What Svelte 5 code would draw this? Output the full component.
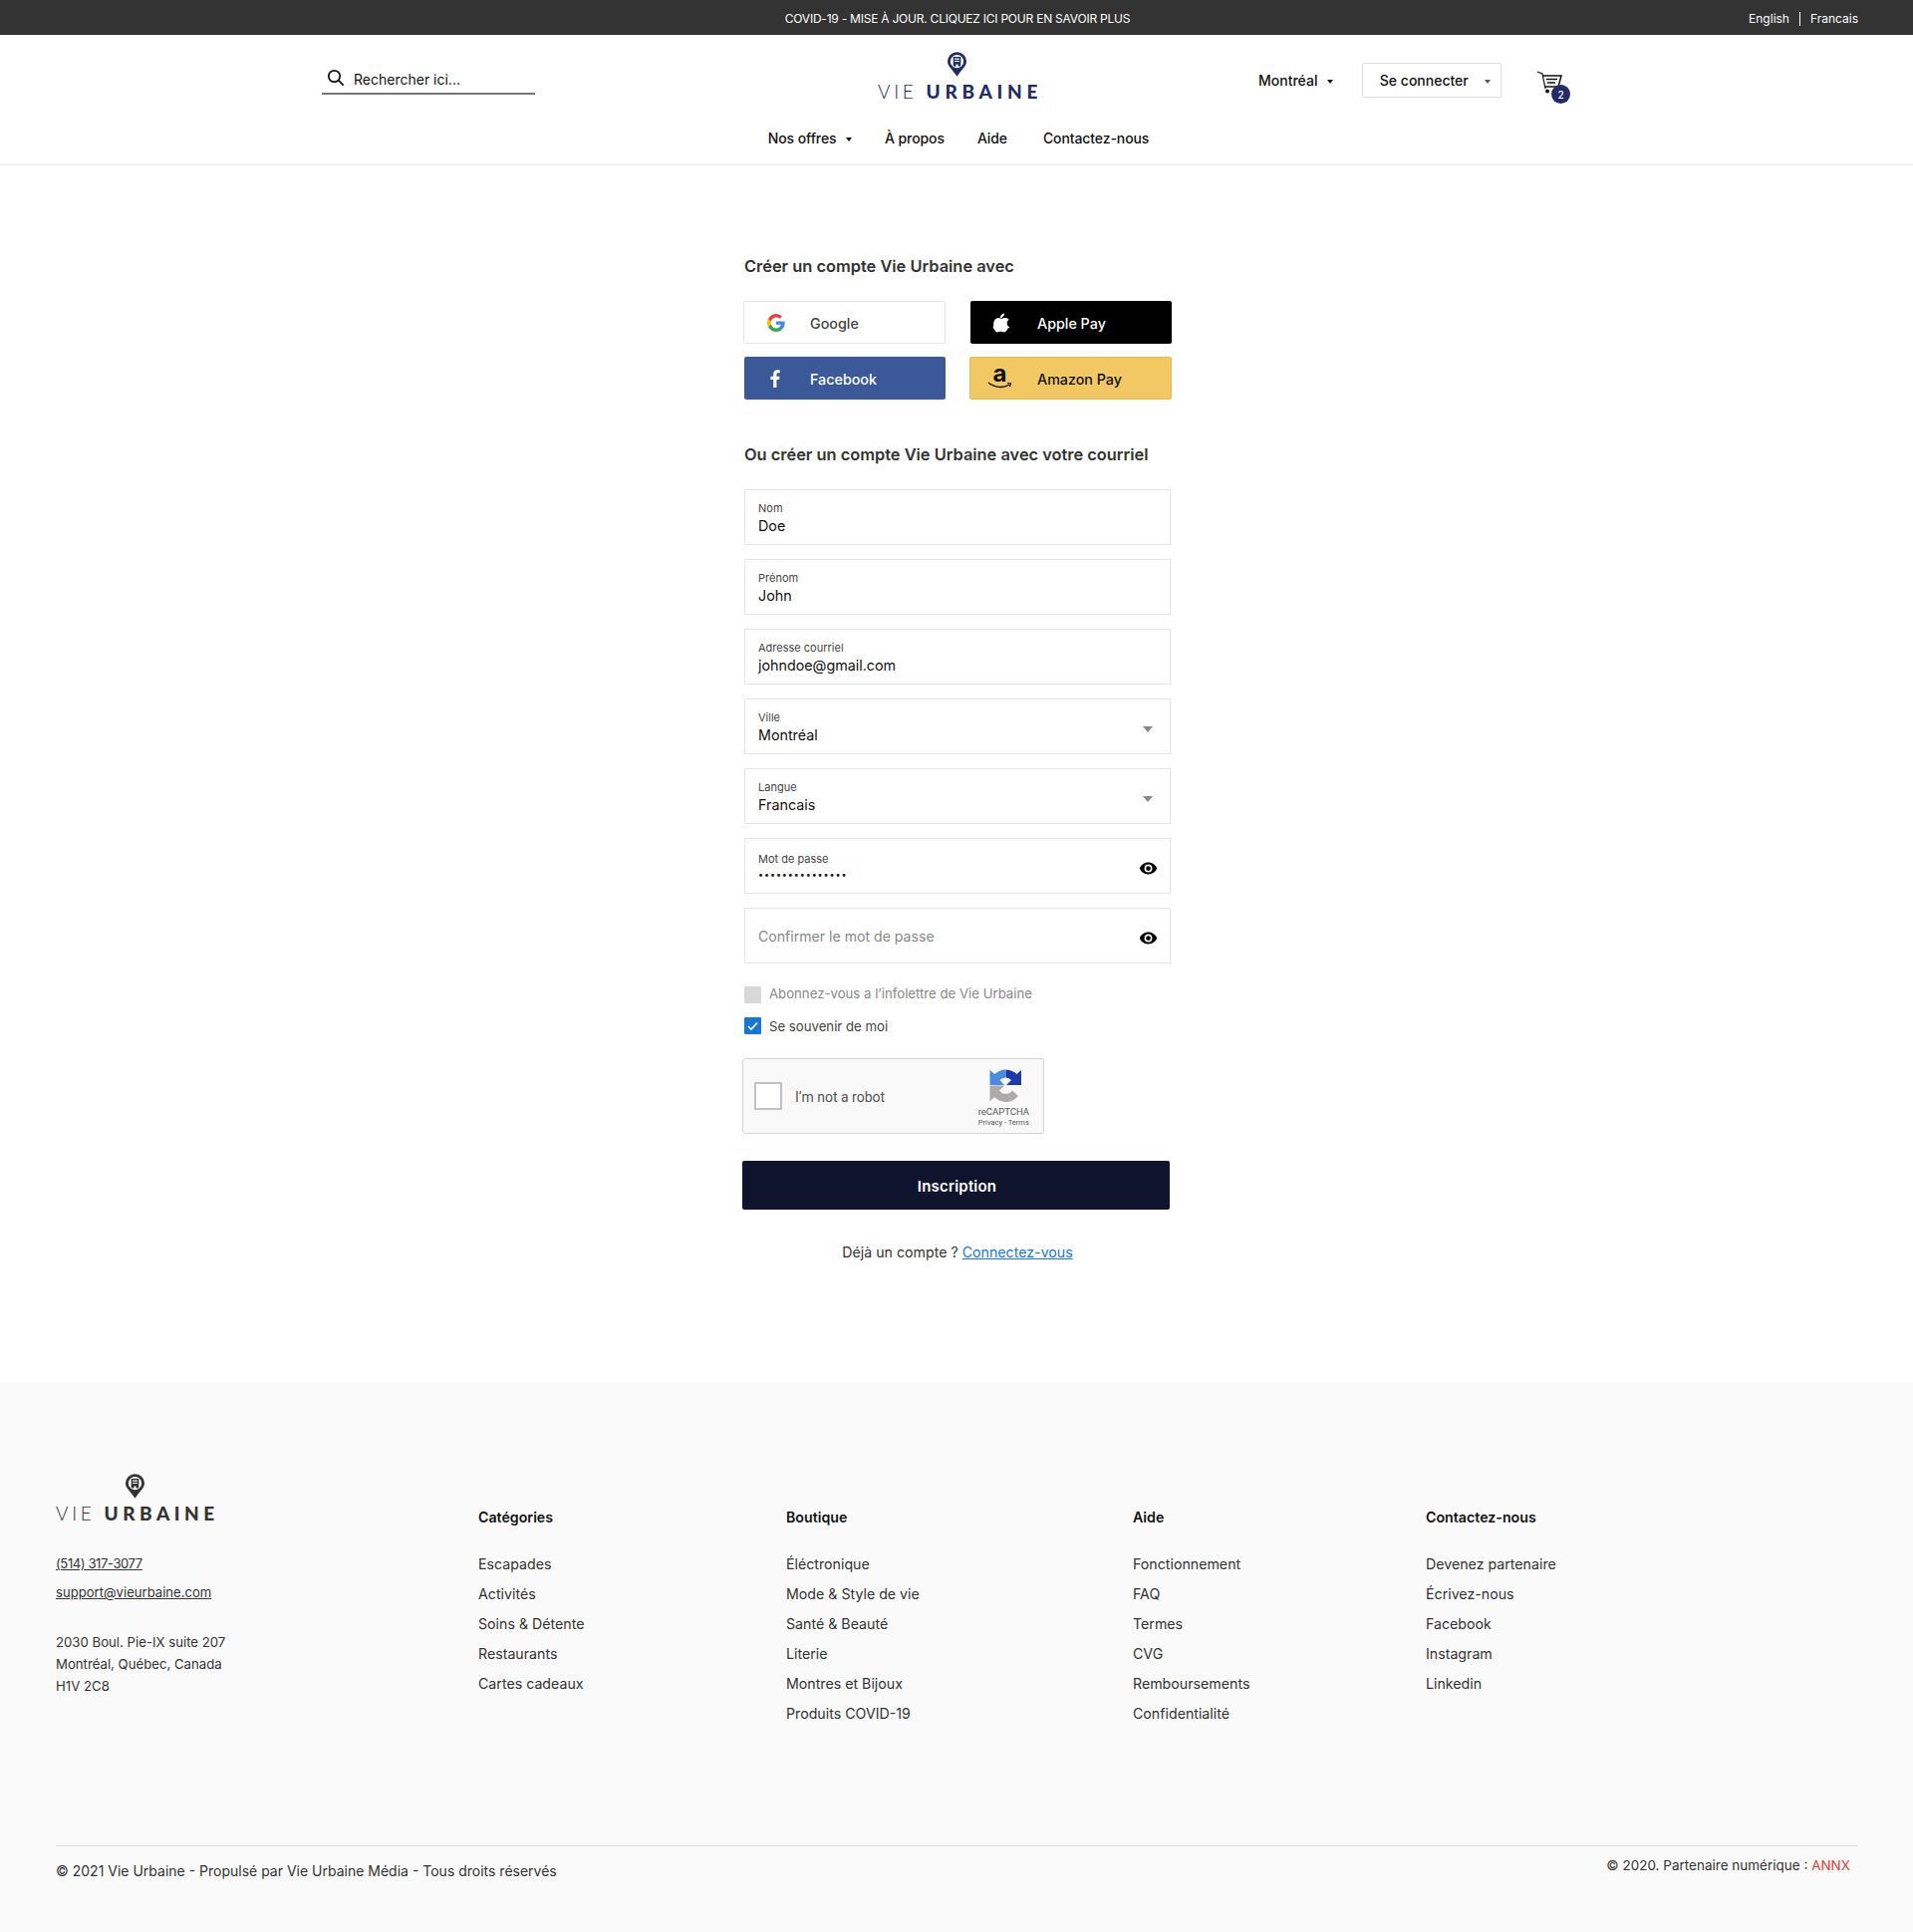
<script>
  const socials = [
    { id: 'google', label: 'Google' },
    { id: 'apple', label: 'Apple Pay' },
    { id: 'facebook', label: 'Facebook' },
    { id: 'amazon', label: 'Amazon Pay' }
  ];
  const fields = [
    { label: 'Nom', value: 'Doe' },
    { label: 'Prénom', value: 'John' },
    { label: 'Adresse courriel', value: 'johndoe@gmail.com' },
    { label: 'Ville', value: 'Montréal', icon: 'caret' },
    { label: 'Langue', value: 'Francais', icon: 'caret' },
    { label: 'Mot de passe', value: '•••••••••••••••', icon: 'eye', secret: true },
    { placeholder: 'Confirmer le mot de passe', icon: 'eye' }
  ];
  const cols = [
    { title: 'Catégories', links: ['Escapades', 'Activités', 'Soins & Détente', 'Restaurants', 'Cartes cadeaux'] },
    { title: 'Boutique', links: ['Éléctronique', 'Mode & Style de vie', 'Santé & Beauté', 'Literie', 'Montres et Bijoux', 'Produits COVID-19'] },
    { title: 'Aide', links: ['Fonctionnement', 'FAQ', 'Termes', 'CVG', 'Remboursements', 'Confidentialité'] },
    { title: 'Contactez-nous', links: ['Devenez partenaire', 'Écrivez-nous', 'Facebook', 'Instagram', 'Linkedin'] }
  ];
</script>

{#snippet pin(color)}
  <svg class="pin" viewBox="0 0 20 26" width="19" height="25">
    <path fill={color} d="M10 0a10 10 0 0 0-10 10c0 5 5 8 10 16 5-8 10-11 10-16A10 10 0 0 0 10 0z" />
    <circle cx="10" cy="10" r="7" fill="#fff" />
    <path fill={color} d="M6 5h8v10h-3v-2H9v2H6z" />
    <path fill="#fff" d="M7.500 6.700h5v1.200h-5zM7.500 9.200h5v1.200h-5z" />
  </svg>
{/snippet}

{#snippet logo(color, big)}
  <div class="logo" class:big style:color={big ? color : undefined}>
    {@render pin(color)}
    <div class="wordmark"><span class="vie">VIE</span><b>URBAINE</b></div>
  </div>
{/snippet}

{#snippet socialIcon(id)}
  {#if id === 'google'}
    <svg viewBox="0 0 18 18" width="18" height="18">
      <path fill="#4285F4" d="M17.600 9.200c0-.6-.1-1.200-.2-1.800H9v3.400h4.800a4.100 4.100 0 0 1-1.800 2.700v2.200h2.900c1.700-1.500 2.700-3.800 2.700-6.500z" />
      <path fill="#34A853" d="M9 18c2.400 0 4.500-.8 5.900-2.200L12 13.600c-.8.500-1.800.9-3 .9-2.300 0-4.300-1.600-5-3.700H1v2.300A9 9 0 0 0 9 18z" />
      <path fill="#FBBC05" d="M4 10.700a5.400 5.400 0 0 1 0-3.400V5H1a9 9 0 0 0 0 8z" />
      <path fill="#EA4335" d="M9 3.600c1.300 0 2.500.5 3.400 1.300L15 2.400A9 9 0 0 0 1 5l3 2.300c.7-2.100 2.700-3.700 5-3.700z" />
    </svg>
  {:else if id === 'apple'}
    <svg viewBox="0 0 170 170" width="20" height="20">
      <path fill="#fff" d="M150.400 130.300c-2.400 5.600-5.300 10.700-8.600 15.400-4.500 6.500-8.200 10.900-11.100 13.400-4.400 4.100-9.200 6.200-14.300 6.300-3.700 0-8.100-1-13.300-3.200-5.200-2.100-10-3.200-14.400-3.200-4.600 0-9.500 1.100-14.800 3.200-5.300 2.100-9.600 3.300-12.800 3.400-4.900.2-9.800-2-14.700-6.500-3.100-2.700-7-7.300-11.700-13.900-5-7-9.100-15.200-12.400-24.500C29 110.600 27.200 100.800 27.200 91.300c0-10.900 2.400-20.300 7.100-28.200 3.700-6.300 8.600-11.300 14.800-15 6.200-3.700 12.800-5.500 20-5.700 3.900 0 9.100 1.200 15.500 3.600 6.400 2.400 10.500 3.600 12.300 3.600 1.300 0 5.900-1.400 13.600-4.300 7.300-2.600 13.400-3.700 18.500-3.300 13.700 1.100 24 6.500 30.800 16.200-12.200 7.400-18.300 17.800-18.200 31.200.1 10.400 3.900 19.100 11.300 26 3.400 3.200 7.200 5.700 11.300 7.400-.9 2.600-1.900 5.100-2.900 7.500zM119.100 7.200c0 8.200-3 15.800-8.900 22.900-7.200 8.400-15.900 13.200-25.300 12.500-.1-1-.2-2-.2-3.100 0-7.800 3.400-16.200 9.500-23.100 3-3.500 6.900-6.400 11.500-8.700 4.600-2.300 9-3.500 13.100-3.700.2 1.100.2 2.200.2 3.200z" />
    </svg>
  {:else if id === 'facebook'}
    <svg viewBox="0 0 11 20" width="10" height="18">
      <path fill="#fff" d="M7.100 20v-8.900h3l.5-3.500H7.100V5.400c0-1 .3-1.700 1.700-1.700h1.900V.5C10.400.4 9.300.3 8 .3 5.300.3 3.500 2 3.500 5v2.600H.4v3.500h3.100V20z" />
    </svg>
  {:else}
    <span class="amz"><span class="a-letter">a</span>
      <svg viewBox="0 0 25 8" width="25" height="8">
        <path fill="none" stroke="#111" stroke-width="1.500" d="M1 1c6 5 15 6 21 2" />
        <path fill="none" stroke="#111" stroke-width="1.200" d="M20 1.500l3.500.2-1 3.300" />
      </svg>
    </span>
  {/if}
{/snippet}

<div class="topbar">
  <span class="covid">COVID-19 - MISE À JOUR. CLIQUEZ ICI POUR EN SAVOIR PLUS</span>
  <div class="langs"><span>English</span><i></i><span>Francais</span></div>
</div>

<header>
  <div class="head-row">
    <label class="search">
      <svg viewBox="0 0 18 18" width="18" height="18">
        <circle cx="7.500" cy="7.500" r="5.700" fill="none" stroke="#111" stroke-width="1.700" />
        <path d="M11.700 11.700l5 5" stroke="#111" stroke-width="1.700" />
      </svg>
      <span>Rechercher ici...</span>
    </label>
    {@render logo('#232c64', true)}
    <div class="head-right">
      <span class="city">Montréal <em class="tri"></em></span>
      <button class="login">Se connecter <em class="tri grey"></em></button>
      <div class="cart">
        <svg viewBox="0 0 26 24" width="26" height="24">
          <path fill="none" stroke="#111" stroke-width="1.200" d="M1 1l5 2 3 15" />
          <path fill="none" stroke="#111" stroke-width="1.500" d="M6 5h19l-3 11H8.500" />
          <path stroke="#111" stroke-width="1.400" d="M10 8.500h11M11 12h8" />
          <circle cx="11" cy="20.500" r="2" fill="#111" />
        </svg>
        <span class="badge">2</span>
      </div>
    </div>
  </div>
  <nav>
    <span>Nos offres <em class="tri"></em></span>
    <span>À propos</span>
    <span>Aide</span>
    <span class="last">Contactez-nous</span>
  </nav>
</header>

<main>
  <h2 class="h1">Créer un compte Vie Urbaine avec</h2>
  <div class="socials">
    {#each socials as s}
      <button class="social {s.id}">
        <span class="s-icon">{@render socialIcon(s.id)}</span>
        <span>{s.label}</span>
      </button>
    {/each}
  </div>
  <h2 class="h2">Ou créer un compte Vie Urbaine avec votre courriel</h2>
  <div class="fields">
    {#each fields as f}
      <div class="field">
        {#if f.label}
          <div class="stack">
            <span class="f-label">{f.label}</span>
            <span class="f-value" class:secret={f.secret}>{f.value}</span>
          </div>
        {:else}
          <span class="f-ph">{f.placeholder}</span>
        {/if}
        {#if f.icon === 'caret'}
          <em class="caret"></em>
        {:else if f.icon === 'eye'}
          <svg class="eye" viewBox="0 0 24 24" width="19" height="19">
            <path fill="#000" d="M12 4.500C7 4.500 2.700 7.600 1 12c1.700 4.400 6 7.500 11 7.500s9.300-3.100 11-7.500c-1.700-4.400-6-7.500-11-7.500zM12 17a5 5 0 1 1 0-10 5 5 0 0 1 0 10zm0-8a3 3 0 1 0 0 6 3 3 0 0 0 0-6z" />
          </svg>
        {/if}
      </div>
    {/each}
  </div>
  <div class="check muted"><span class="box"></span><span class="lift">Abonnez-vous a l’infolettre de Vie Urbaine</span></div>
  <div class="check"><span class="box on">
    <svg viewBox="0 0 17 17" width="17" height="17"><path fill="none" stroke="#fff" stroke-width="1.600" d="M4 9l3 3 6-6.500" /></svg>
  </span>Se souvenir de moi</div>

  <div class="captcha">
    <span class="c-box"></span>
    <span class="c-text">I’m not a robot</span>
    <div class="c-brand">
      <svg viewBox="0 0 33 33" width="33" height="33">
        <path fill="#4a8be0" d="M16.500.5V8.500A8 8 0 0 0 10.500 11L15 16H.5V1L5.500 5A16 16 0 0 1 16.500.5Z" />
        <path fill="#1c3aa9" d="M16.500.5A16 16 0 0 1 27.500 5L32 1V16H17L22 11A8 8 0 0 0 16.500 8.500Z" />
        <path fill="#ababab" d="M.5 16.500H15L10 21.500A8 8 0 0 0 23 21.500L29 27A16 16 0 0 1 5 28L.5 32.500Z" />
      </svg>
      <span class="c-name">reCAPTCHA</span>
      <span class="c-links">Privacy - Terms</span>
    </div>
  </div>

  <button class="submit">Inscription</button>
  <p class="already">Déjà un compte ? <a href="#login">Connectez-vous</a></p>
</main>

<footer>
  <div class="f-grid">
    <div class="f-about">
      {@render logo('#333333', false)}
      <a class="contact phone" href="#tel">(514) 317-3077</a>
      <a class="contact" href="#mail">support@vieurbaine.com</a>
      <address>2030 Boul. Pie-IX suite 207<br />Montréal, Québec, Canada<br />H1V 2C8</address>
    </div>
    {#each cols as c}
      <div class="f-col">
        <h4>{c.title}</h4>
        <ul>
          {#each c.links as l}<li>{l}</li>{/each}
        </ul>
      </div>
    {/each}
  </div>
  <div class="f-bottom">
    <span class="copy">© 2021 Vie Urbaine - Propulsé par Vie Urbaine Média - Tous droits réservés</span>
    <span class="partner">© 2020. Partenaire numérique : <b>ANNX</b></span>
  </div>
</footer>

<style>
  :global(body) { margin: 0; background: #fff; font-family: Inter, "Liberation Sans", sans-serif; color: #111; }
  button { font-family: inherit; cursor: pointer; }
  h2, h4, p, ul { margin: 0; padding: 0; }
  ul { list-style: none; }
  em { font-style: normal; }

  .topbar { height: 35px; padding: 2px 0 0 2px; box-sizing: border-box; background: #333; color: #fff; font-size: 12px; display: flex; align-items: center; justify-content: center; position: relative; }
  .covid { letter-spacing: -0.23px; }
  .langs { position: absolute; right: 55px; top: 1px; height: 35px; display: flex; align-items: center; }
  .langs i { width: 1px; height: 14px; background: #fff; margin: 0 10px; }

  header { height: 130px; border-bottom: 1px solid #e8e8e8; box-sizing: content-box; }
  .head-row { height: 88px; width: 1274px; margin: 0 auto; display: grid; grid-template-columns: 1fr auto 1fr; }
  .search { width: 214px; height: 60px; border-bottom: 2px solid #777; display: flex; align-items: flex-end; gap: 9px; padding: 0 0 5px 5px; box-sizing: border-box; font-size: 14px; color: #111; }
  .search svg { margin-bottom: 1px; }
  .logo { display: flex; flex-direction: column; align-items: center; padding-top: 17px; color: #333; }
  .logo.big { margin-left: 6px; }
  .logo.big .pin { margin-right: 5px; }
  .logo .wordmark { font-size: 19px; letter-spacing: 3.700px; line-height: 20px; margin-top: 5px; white-space: nowrap; font-family: Lato, sans-serif; }
  .logo .vie { font-weight: 300; margin-right: 10px; }
  .logo.big .vie { margin-left: 1px; margin-right: 9px; }
  .logo b { font-weight: 900; letter-spacing: 4.700px; }
  .head-right { display: flex; align-items: flex-start; padding: 28px 0 0 217px; font-size: 14px; font-weight: 500; }
  .city { white-space: nowrap; line-height: 35px; margin-right: 29px; }
  .tri { display: inline-block; border: 3.500px solid transparent; border-top: 4.500px solid #111; border-bottom: 0; vertical-align: 2px; margin-left: 6px; }
  .tri.grey { border-top-color: #555; margin-left: 13px; }
  .login { width: 140px; height: 35px; background: #fff; border: 1px solid #ddd; border-radius: 2px; font-size: 14px; font-weight: 500; white-space: nowrap; padding: 0 0 0 7px; color: #111; }
  .cart { position: relative; margin: 8px 0 0 35px; width: 36px; height: 32px; }
  .badge { position: absolute; left: 15px; top: 14px; width: 19px; height: 19px; border-radius: 50%; background: #232c64; color: #fff; font-size: 10px; display: flex; align-items: center; justify-content: center; }

  nav { display: flex; justify-content: center; gap: 33px; font-size: 14px; font-weight: 500; line-height: 20px; padding: 6px 0 0 4px; letter-spacing: -0.1px; }
  nav .last { margin-left: 3px; }

  main { width: 430px; margin: 0 auto; padding-top: 90px; height: 1222px; box-sizing: border-box; }
  .h1, .h2 { font-size: 16.400px; font-weight: 600; color: #333; line-height: 22px; margin-left: 2px; white-space: nowrap; }
  .socials { display: grid; grid-template-columns: 203px 203px; justify-content: space-between; gap: 13px 24px; margin: 24px 0 0 1px; }
  .social { height: 43px; display: flex; align-items: center; border-radius: 2px; border: 1px solid transparent; font-size: 14.300px; font-weight: 500; padding: 2px 0 0; }
  .s-icon { width: 66px; flex: none; display: flex; justify-content: center; box-sizing: border-box; margin-top: -2px; }
  .google { background: #fff; border-color: #e4e4e4; color: #444; }
  .google .s-icon { padding-right: 2px; }
  .apple { background: #000; color: #fff; margin-left: 1px; }
  .apple .s-icon { width: 66px; padding-right: 9px; }
  .facebook { background: #3b5998; color: #fff; margin-left: 1px; }
  .facebook .s-icon { width: 65px; padding-right: 6px; }
  .social.amazon { background: #f1c864; border-color: #e5bb55; color: #111; }
  .amazon .s-icon { width: 67px; padding-right: 8px; }
  .amz { display: flex; flex-direction: column; align-items: center; line-height: 16px; margin-top: -3px; }
  .amz svg { margin-top: -1px; }
  .a-letter { font-size: 24px; font-weight: 700; line-height: 19px; color: #111; }
  .h2 { margin-top: 44px; }
  .fields { margin: 24px 0 0 2px; display: flex; flex-direction: column; gap: 14px; width: 428px; }
  .field { height: 56px; box-sizing: border-box; border: 1px solid #e3e6e6; display: flex; align-items: center; justify-content: space-between; padding: 0 13px; }
  .stack { display: flex; flex-direction: column; margin-top: 1px; }
  .f-label { font-size: 11px; line-height: 14px; color: #444; }
  .f-value { font-size: 14.300px; line-height: 19px; color: #111; padding-top: 1px; }
  .f-value.secret { font-size: 9px; letter-spacing: 0.900px; height: 16px; line-height: 17px; padding-top: 0; }
  .f-ph { font-size: 14.100px; color: #888; }
  .caret { border: 5px solid transparent; border-top: 6px solid #888; border-bottom: 0; margin: 6px 4px 0 0; }
  .eye { margin: 4px -1px 0 0; }
  .check { margin-left: 2px; display: flex; align-items: center; gap: 8px; height: 17px; font-size: 13.200px; color: #444; margin-top: 14px; }
  .check.muted { color: #888; margin-top: 23px; }
  .lift { margin-top: -4px; }
  .box { width: 17px; height: 17px; background: #d8d8d8; flex: none; border-radius: 1px; }
  .box.on { background: #1976d2; }
  .captcha { margin-top: 24px; width: 303px; height: 76px; box-sizing: border-box; background: #f9f9f9; border: 1px solid #d3d3d3; border-radius: 3px; display: flex; align-items: center; position: relative; }
  .c-box { width: 28px; height: 28px; box-sizing: border-box; background: #fff; border: 2px solid #c1c1c1; margin-left: 11px; }
  .c-text { font-family: Roboto, sans-serif; font-size: 14px; color: #555; margin: 2px 0 0 13px; }
  .c-brand { position: absolute; right: 14px; top: 10px; display: flex; flex-direction: column; align-items: center; color: #555; font-family: Roboto, sans-serif; }
  .c-brand svg { margin-left: 4px; }
  .c-name { font-size: 9.500px; line-height: 12px; margin-top: 4px; }
  .c-links { font-size: 7.500px; line-height: 11px; margin-top: -1px; }
  .submit { display: block; margin-top: 27px; width: 429px; height: 49px; background: #0f142e; border: 0; border-radius: 2px; color: #fff; font-size: 15px; font-weight: 600; letter-spacing: 0.2px; padding: 2px 0 0 2px; }
  .already { margin-top: 33px; padding-left: 2px; text-align: center; font-size: 14.200px; color: #333; line-height: 20px; }
  .already a { color: #1976d2; }

  footer { height: 551px; background: #fafafa; box-sizing: border-box; padding: 90px 56px 0; color: #333; font-size: 14.200px; }
  .f-grid { display: grid; grid-template-columns: 424px 309px 348px 294px 1fr; height: 374px; border-bottom: 1px solid #ddd; }
  .logo:not(.big) { align-items: flex-start; padding-top: 1px; }
  .logo:not(.big) .pin { margin-left: 70px; }
  .logo:not(.big) b { letter-spacing: 4.500px; }
  .logo:not(.big) .vie { margin-right: 9px; }
  .contact { display: block; width: max-content; font-size: 13.100px; color: #333; line-height: 20px; }
  .phone { letter-spacing: -0.430px; }
  .f-about .contact:first-of-type { margin-top: 30px; }
  .contact + .contact { margin-top: 9px; }
  address { font-style: normal; font-size: 13.200px; line-height: 22px; margin-top: 29px; }
  .f-col h4 { font-size: 14.200px; font-weight: 600; color: #111; line-height: 20px; margin-top: 35px; }
  .f-col ul { margin-top: 22px; }
  .f-col li { line-height: 30px; height: 30px; }
  .f-bottom { display: flex; justify-content: space-between; align-items: flex-start; }
  .copy { margin-top: 15px; line-height: 20px; font-size: 14px; }
  .partner { margin: 9px 7px 0 0; font-size: 13.500px; line-height: 20px; }
  .partner b { font-weight: 400; color: #e53935; }
</style>
